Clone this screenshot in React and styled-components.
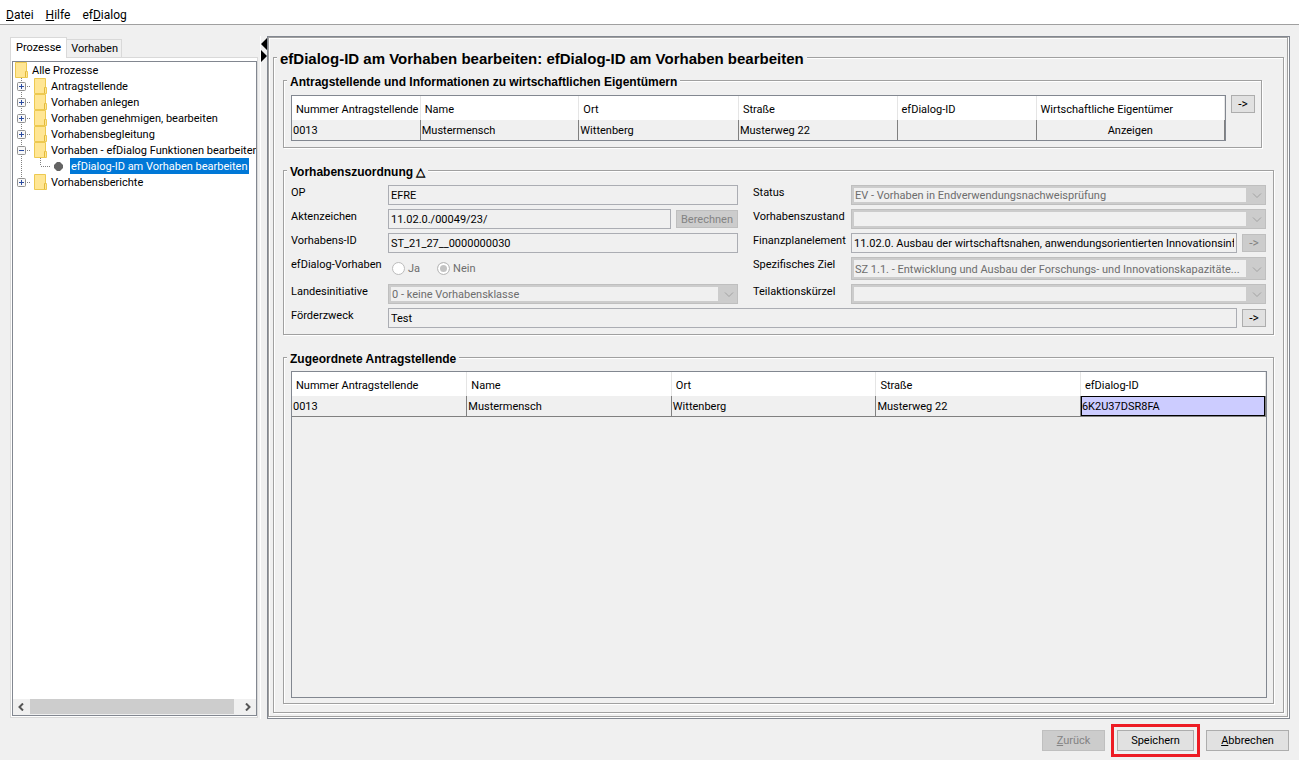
import React, { useState } from 'react';
import styled, { createGlobalStyle, css } from 'styled-components';

const GlobalStyle = createGlobalStyle`
  * {
    box-sizing: border-box;
  }

  body {
    margin: 0;
    background-color: #f0f0f0;
    color: #000;
    font-family: Roboto, 'Liberation Sans', sans-serif;
    font-size: 11px;
    line-height: 14px;
  }

  button, input, select {
    font: inherit;
    margin: 0;
  }
`;

// Swing style etched line: grey with a white highlight to the bottom right
const etched = css`
  border: 1px solid #a0a0a0;
  box-shadow: 1px 1px 0 #fff, inset 1px 1px 0 #fff;
`;

const Page = styled.div`
  display: flex;
  flex-direction: column;
  min-height: 100vh;
`;

const MenuBar = styled.nav`
  display: flex;
  align-items: center;
  gap: 12px;
  height: 25px;
  padding: 5px 6px 0;
  background-color: #fff;
  border-bottom: 1px solid #a0a0a0;
`;

const MenuItem = styled.button`
  padding: 0;
  border: none;
  background: none;
  color: #000;
  font-size: 12px;
  line-height: 16px;
`;

const Main = styled.main`
  flex: 1;
  display: flex;
  padding: 11px 9px 0 10px;
`;

const Sidebar = styled.aside`
  display: flex;
  flex-direction: column;
  flex: 0 0 248px;
  min-width: 0;
  padding: 1px 0;
`;

const Tabs = styled.div`
  display: flex;
  align-items: flex-end;
  height: 20px;
`;

const Tab = styled.button`
  height: ${(props) => (props.$active ? '21px' : '18px')};
  margin-bottom: ${(props) => (props.$active ? '-1px' : '0')};
  padding: ${(props) => (props.$active ? '0 5px' : '1px 3px 0 4px')};
  border: 1px solid #d9d9d9;
  border-bottom: none;
  border-left-width: ${(props) => (props.$active ? '1px' : '0')};
  background-color: ${(props) => (props.$active ? '#fff' : '#f0f0f0')};
  color: #000;
  z-index: 1;
`;

const TabPane = styled.div`
  flex: 1;
  display: flex;
  padding: 3px 0 1px 1px;
  border: 1px solid #d9d9d9;
  background-color: #fff;
`;

const TreeBox = styled.div`
  flex: 1;
  display: flex;
  flex-direction: column;
  min-width: 0;
  border: 1px solid #828790;
  background-color: #fff;
`;

const Tree = styled.ul`
  flex: 1;
  margin: 0;
  padding: 0;
  list-style: none;
  overflow: hidden;
`;

const TreeRow = styled.li`
  display: flex;
  align-items: center;
  height: 16px;
  padding-left: ${(props) => (props.$root ? '2px' : '0')};
  white-space: nowrap;

  svg {
    flex: none;
  }
`;

const TreeLabel = styled.span`
  margin-left: ${(props) => (props.$selected ? '0' : '3px')};
  padding: 2px 1px 0;
  line-height: 14px;
  background-color: ${(props) => (props.$selected ? '#0078d7' : 'transparent')};
  color: ${(props) => (props.$selected ? '#fff' : '#000')};
`;

const ScrollBar = styled.div`
  display: flex;
  height: 16px;
  padding-bottom: 1px;
  background-color: #f0f0f0;
`;

const ScrollButton = styled.button`
  display: flex;
  align-items: center;
  justify-content: center;
  width: 17px;
  padding: 0;
  border: none;
  background: none;
`;

const ScrollTrack = styled.div`
  flex: 1;
  padding-right: 5px;
`;

const ScrollThumb = styled.div`
  height: 100%;
  background-color: #cdcdcd;
`;

const Splitter = styled.div`
  width: 7px;
  margin-left: 2px;
  padding-top: 2px;
  border-left: 1px solid #fff;

  svg {
    display: block;
  }
`;

const Content = styled.section`
  flex: 1;
  display: flex;
  min-width: 0;
  border: 1px solid #828790;
`;

const ContentInner = styled.div`
  ${etched}
  flex: 1;
  display: flex;
  min-width: 0;
  margin: 0 1px 1px 0;
  padding: 9px 3px 3px 4px;
`;

const Group = styled.fieldset`
  ${etched}
  min-width: 0;
  margin: 0;
  padding: 0;
`;

const PageGroup = styled(Group)`
  flex: 1;
  display: flex;
`;

const Legend = styled.legend`
  margin-left: 3px;
  padding: 4px 3px 0;
  background-color: #f0f0f0;
  font-family: 'Liberation Sans', Arial, sans-serif;
  font-size: ${(props) => (props.$large ? '15px' : '12px')};
  font-weight: 700;
  line-height: ${(props) => (props.$large ? '16px' : '14px')};
`;

const Sections = styled.div`
  flex: 1;
  display: flex;
  flex-direction: column;
  gap: 13px;
  min-width: 0;
  padding: 4px 9px 8px;
`;

const ApplicantGroup = styled(Group)`
  margin-right: 12px;
`;

const ApplicantBody = styled.div`
  display: flex;
  align-items: flex-start;
  gap: 5px;
  padding: 6px 6px 6px 7px;
`;

const AssignedGroup = styled(Group)`
  flex: 1;
  display: flex;
`;

const AssignedBody = styled.div`
  flex: 1;
  display: flex;
  min-width: 0;
  padding: 5px 6px 5px 7px;
`;

const TableBox = styled.div`
  flex: 1;
  min-width: 0;
  border: 1px solid #828790;
`;

const Table = styled.table`
  width: 100%;
  table-layout: fixed;
  border-spacing: 0;
`;

const HeadCell = styled.th`
  height: 24px;
  padding: 3px 0 0 4px;
  border-right: 1px solid #e5e5e5;
  background-color: #fff;
  font-weight: 400;
  text-align: left;
  white-space: nowrap;
`;

const Cell = styled.td`
  height: ${(props) => (props.$ruled ? '21px' : '20px')};
  padding: 1px 1px 0;
  border-right: 1px solid #808080;
  border-bottom: ${(props) => (props.$ruled ? '1px solid #808080' : 'none')};
  text-align: ${(props) => props.$align || 'left'};
  white-space: nowrap;

  ${(props) =>
    props.$selected &&
    css`
      background-color: #ccccff;
      box-shadow: inset 0 0 0 1px #000;
    `}
`;

const Form = styled.div`
  display: grid;
  grid-template-columns: 97px minmax(0, 350fr) 113px minmax(0, 415fr);
  row-gap: 4px;
  padding: 6px 7px;
`;

const Label = styled.label`
  padding-top: 1px;
  padding-left: ${(props) => (props.$second ? '15px' : '0')};
  white-space: nowrap;
`;

const FieldRow = styled.div`
  display: flex;
  align-items: center;
  gap: 5px;
  min-width: 0;
  grid-column: ${(props) => (props.$wide ? '2 / -1' : 'auto')};
`;

const TextInput = styled.input`
  flex: 1;
  min-width: 0;
  height: 20px;
  padding: 0 2px;
  border: 1px solid #abadb3;
  background-color: #f0f0f0;
  color: #000;
  outline: none;
`;

const SelectBox = styled.div`
  flex: 1;
  display: flex;
  align-self: stretch;
  align-items: center;
  min-width: 0;
  min-height: 20px;
  padding: 2px 0 2px 2px;
  border: 1px solid #bfbfbf;
  background-color: #ccc;

  svg {
    flex: none;
  }
`;

const Select = styled.select`
  flex: 1;
  align-self: stretch;
  min-width: 0;
  padding: 1px 1px 0;
  border: none;
  border-radius: 0;
  background-color: #f0f0f0;
  color: #6d6d6d;
  line-height: 13px;
  opacity: 1;
  appearance: none;
  text-overflow: ellipsis;
`;

const RadioRow = styled.div`
  display: flex;
  align-items: center;
  gap: 17px;
  height: 23px;
  padding-left: 4px;
`;

const RadioLabel = styled.label`
  display: flex;
  align-items: center;
  gap: 3px;
  color: #6d6d6d;
`;

const Radio = styled.input`
  appearance: none;
  width: 13px;
  height: 13px;
  border: 1px solid #bcbcbc;
  border-radius: 50%;
  background-color: #fff;

  &:checked {
    background-color: #c3c3c3;
    box-shadow: inset 0 0 0 2px #fff;
  }
`;

const Button = styled.button`
  height: ${(props) => (props.$small ? '18px' : '21px')};
  min-width: ${(props) => props.$width || '24px'};
  padding: ${(props) => (props.$small ? '1px 4px 0' : '0 4px')};
  border: 1px solid #adadad;
  background-color: #e1e1e1;
  color: #000;
  line-height: 14px;

  &:disabled {
    border-color: #bfbfbf;
    background-color: #ccc;
    color: #838383;
  }
`;

const ArrowButton = styled(Button)`
  padding: 0 4px;
  font-size: 12px;
`;

const Footer = styled.footer`
  display: flex;
  align-items: center;
  justify-content: flex-end;
  gap: 6px;
  padding: 5px 10px 3px;
`;

const Highlight = styled.div`
  display: flex;
  padding: 3px;
  border: 3px solid #ed1c24;
`;

const treeItems = [
  { label: 'Antragstellende' },
  { label: 'Vorhaben anlegen' },
  { label: 'Vorhaben genehmigen, bearbeiten' },
  { label: 'Vorhabensbegleitung' },
  {
    label: 'Vorhaben - efDialog Funktionen bearbeiten',
    children: ['efDialog-ID am Vorhaben bearbeiten'],
  },
  { label: 'Vorhabensberichte', last: true },
];

const applicantColumns = [
  { title: 'Nummer Antragstellende', width: 13.8 },
  { title: 'Name', width: 17 },
  { title: 'Ort', width: 17.1 },
  { title: 'Straße', width: 17 },
  { title: 'efDialog-ID', width: 14.9 },
  { title: 'Wirtschaftliche Eigentümer', width: 20.2, align: 'center' },
];

const applicantRows = [['0013', 'Mustermensch', 'Wittenberg', 'Musterweg 22', '', 'Anzeigen']];

const assignedColumns = [
  { title: 'Nummer Antragstellende', width: 18 },
  { title: 'Name', width: 21 },
  { title: 'Ort', width: 21 },
  { title: 'Straße', width: 21 },
  { title: 'efDialog-ID', width: 19, selected: true },
];

const assignedRows = [['0013', 'Mustermensch', 'Wittenberg', 'Musterweg 22', '6K2U37DSR8FA']];

const FolderIcon = () => (
  <svg width="13" height="16" viewBox="0 0 13 16" aria-hidden="true">
    <path d="M0.5 0.5h11v9h1v6h-12z" fill="#ffe694" stroke="#edc951" />
    <path d="M10.5 15v-5.500h1" fill="none" stroke="#e3b93a" />
  </svg>
);

const Gutter = ({ open, last }) => (
  <svg width="21" height="16" viewBox="0 0 21 16" aria-hidden="true">
    <path d={last ? 'M8.500 0v4' : 'M8.500 0v16'} stroke="#808080" strokeDasharray="1 1" />
    <path d="M14 8.500h3" stroke="#808080" strokeDasharray="1 1" />
    <rect x="4.500" y="4.500" width="8" height="8" rx="1" fill="#f8f8f8" stroke="#919191" />
    <path d={open ? 'M6 8.500h5' : 'M6 8.500h5M8.500 6v5'} stroke="#2b4ba0" />
  </svg>
);

const ChildGutter = () => (
  <svg width="57" height="16" viewBox="0 0 57 16" aria-hidden="true">
    <path d="M8.500 0v16M27.500 0v8M28 8.500h10" fill="none" stroke="#808080" strokeDasharray="1 1" />
    <path d="M44 4h3l3 3v3l-3 3h-3l-3 -3v-3z" fill="#646464" />
  </svg>
);

const DropArrow = () => (
  <svg width="19" height="14" viewBox="0 0 19 14" aria-hidden="true">
    <path d="M7 5.500l4 4l4 -4" fill="none" stroke="#a3a3a3" />
  </svg>
);

const ScrollArrow = ({ right }) => (
  <svg width="8" height="8" viewBox="0 0 8 8" aria-hidden="true">
    <path
      d={right ? 'M2 0.500l3.500 3.500l-3.500 3.500' : 'M5 0.500l-3.500 3.500l3.500 3.500'}
      fill="none"
      stroke="#555"
      strokeWidth="2"
    />
  </svg>
);

const DataTable = ({ columns, rows, ruled }) => (
  <Table>
    <colgroup>
      {columns.map((col) => (
        <col key={col.title} style={{ width: `${col.width}%` }} />
      ))}
    </colgroup>
    <thead>
      <tr>
        {columns.map((col) => (
          <HeadCell key={col.title} scope="col">{col.title}</HeadCell>
        ))}
      </tr>
    </thead>
    <tbody>
      {rows.map((row) => (
        <tr key={row[0]}>
          {row.map((value, i) => (
            <Cell
              key={columns[i].title}
              $ruled={ruled}
              $align={columns[i].align}
              $selected={columns[i].selected}
            >
              {value}
            </Cell>
          ))}
        </tr>
      ))}
    </tbody>
  </Table>
);

const DropDown = ({ id, value }) => (
  <SelectBox>
    <Select id={id} disabled defaultValue={value}>
      <option value={value}>{value}</option>
    </Select>
    <DropArrow />
  </SelectBox>
);

const App = () => {
  const [tab, setTab] = useState('Prozesse');

  return (
    <Page>
      <GlobalStyle />
      <MenuBar>
        <MenuItem type="button"><u>D</u>atei</MenuItem>
        <MenuItem type="button"><u>H</u>ilfe</MenuItem>
        <MenuItem type="button">ef<u>D</u>ialog</MenuItem>
      </MenuBar>

      <Main>
        <Sidebar>
          <Tabs role="tablist">
            {['Prozesse', 'Vorhaben'].map((name) => (
              <Tab
                key={name}
                type="button"
                role="tab"
                aria-selected={tab === name}
                $active={tab === name}
                onClick={() => setTab(name)}
              >
                {name}
              </Tab>
            ))}
          </Tabs>
          <TabPane>
            <TreeBox>
              <Tree>
                <TreeRow $root>
                  <FolderIcon />
                  <TreeLabel>Alle Prozesse</TreeLabel>
                </TreeRow>
                {treeItems.map((item) => (
                  <React.Fragment key={item.label}>
                    <TreeRow>
                      <Gutter open={Boolean(item.children)} last={item.last} />
                      <FolderIcon />
                      <TreeLabel>{item.label}</TreeLabel>
                    </TreeRow>
                    {item.children?.map((child) => (
                      <TreeRow key={child}>
                        <ChildGutter />
                        <TreeLabel $selected>{child}</TreeLabel>
                      </TreeRow>
                    ))}
                  </React.Fragment>
                ))}
              </Tree>
              <ScrollBar>
                <ScrollButton type="button" aria-label="Nach links"><ScrollArrow /></ScrollButton>
                <ScrollTrack><ScrollThumb /></ScrollTrack>
                <ScrollButton type="button" aria-label="Nach rechts"><ScrollArrow right /></ScrollButton>
              </ScrollBar>
            </TreeBox>
          </TabPane>
        </Sidebar>

        <Splitter>
          <svg width="6" height="24" viewBox="0 0 6 24" aria-hidden="true">
            <path d="M6 0v12l-6 -6zM0 12v12l6 -6z" fill="#000" />
          </svg>
        </Splitter>

        <Content>
          <ContentInner>
            <PageGroup>
              <Legend $large>efDialog-ID am Vorhaben bearbeiten: efDialog-ID am Vorhaben bearbeiten</Legend>
              <Sections>
                <ApplicantGroup>
                  <Legend>Antragstellende und Informationen zu wirtschaftlichen Eigentümern</Legend>
                  <ApplicantBody>
                    <TableBox>
                      <DataTable columns={applicantColumns} rows={applicantRows} />
                    </TableBox>
                    <ArrowButton type="button" $small>-&gt;</ArrowButton>
                  </ApplicantBody>
                </ApplicantGroup>

                <Group>
                  <Legend>Vorhabenszuordnung △</Legend>
                  <Form>
                    <Label htmlFor="op">OP</Label>
                    <FieldRow>
                      <TextInput id="op" readOnly value="EFRE" />
                    </FieldRow>
                    <Label htmlFor="status" $second>Status</Label>
                    <FieldRow>
                      <DropDown id="status" value="EV - Vorhaben in Endverwendungsnachweisprüfung" />
                    </FieldRow>

                    <Label htmlFor="aktenzeichen">Aktenzeichen</Label>
                    <FieldRow>
                      <TextInput id="aktenzeichen" readOnly value="11.02.0./00049/23/" />
                      <Button type="button" $small $width="62px" disabled>Berechnen</Button>
                    </FieldRow>
                    <Label htmlFor="zustand" $second>Vorhabenszustand</Label>
                    <FieldRow>
                      <DropDown id="zustand" value="" />
                    </FieldRow>

                    <Label htmlFor="vorhabensId">Vorhabens-ID</Label>
                    <FieldRow>
                      <TextInput id="vorhabensId" readOnly value="ST_21_27__0000000030" />
                    </FieldRow>
                    <Label htmlFor="finanzplan" $second>Finanzplanelement</Label>
                    <FieldRow>
                      <TextInput
                        id="finanzplan"
                        readOnly
                        value="11.02.0. Ausbau der wirtschaftsnahen, anwendungsorientierten Innovationsinfrastruktur"
                      />
                      <ArrowButton type="button" $small disabled>-&gt;</ArrowButton>
                    </FieldRow>

                    <Label as="span" id="efdialogLabel">efDialog-Vorhaben</Label>
                    <RadioRow role="radiogroup" aria-labelledby="efdialogLabel">
                      <RadioLabel>
                        <Radio type="radio" name="efdialog" disabled />
                        Ja
                      </RadioLabel>
                      <RadioLabel>
                        <Radio type="radio" name="efdialog" disabled defaultChecked />
                        Nein
                      </RadioLabel>
                    </RadioRow>
                    <Label htmlFor="ziel" $second>Spezifisches Ziel</Label>
                    <FieldRow>
                      <DropDown
                        id="ziel"
                        value="SZ 1.1. - Entwicklung und Ausbau der Forschungs- und Innovationskapazitäte..."
                      />
                    </FieldRow>

                    <Label htmlFor="initiative">Landesinitiative</Label>
                    <FieldRow>
                      <DropDown id="initiative" value="0 - keine Vorhabensklasse" />
                    </FieldRow>
                    <Label htmlFor="kuerzel" $second>Teilaktionskürzel</Label>
                    <FieldRow>
                      <DropDown id="kuerzel" value="" />
                    </FieldRow>

                    <Label htmlFor="zweck">Förderzweck</Label>
                    <FieldRow $wide>
                      <TextInput id="zweck" readOnly value="Test" />
                      <ArrowButton type="button" $small>-&gt;</ArrowButton>
                    </FieldRow>
                  </Form>
                </Group>

                <AssignedGroup>
                  <Legend>Zugeordnete Antragstellende</Legend>
                  <AssignedBody>
                    <TableBox>
                      <DataTable columns={assignedColumns} rows={assignedRows} ruled />
                    </TableBox>
                  </AssignedBody>
                </AssignedGroup>
              </Sections>
            </PageGroup>
          </ContentInner>
        </Content>
      </Main>

      <Footer>
        <Button type="button" $width="63px" disabled><u>Z</u>urück</Button>
        <Highlight>
          <Button type="button" $width="77px">Speichern</Button>
        </Highlight>
        <Button type="button" $width="83px"><u>A</u>bbrechen</Button>
      </Footer>
    </Page>
  );
};

export default App;
